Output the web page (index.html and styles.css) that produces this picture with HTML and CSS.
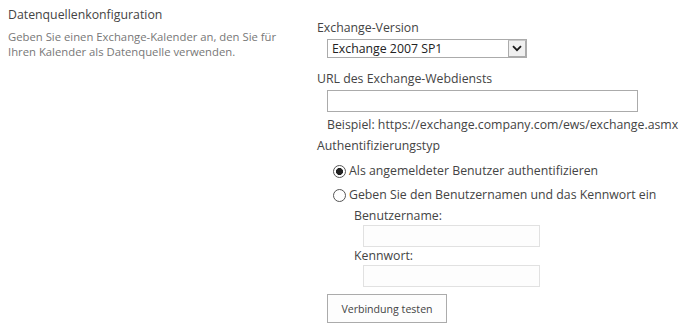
FILE: index.html
```html
<!DOCTYPE html>
<html lang="de">
<head>
    <meta charset="UTF-8">
    <title>Datenquellenkonfiguration</title>
    <link rel="stylesheet" href="styles.css">
</head>
<body>
    <div class="section">
        <div class="section-desc">
            <h3 class="section-title">Datenquellenkonfiguration</h3>
            <p class="section-text">Geben Sie einen Exchange-Kalender an, den Sie für Ihren Kalender als Datenquelle verwenden.</p>
        </div>

        <div class="section-body">
            <div class="field-label">Exchange-Version</div>
            <div class="select-wrap">
                <select class="select">
                    <option>Exchange 2007 SP1</option>
                </select>
                <span class="select-arrow">
                    <svg width="10" height="7" viewBox="0 0 10 7">
                        <path d="M1 1.2 L5 5.2 L9 1.2" fill="none" stroke="#1a1a1a" stroke-width="1.8"/>
                    </svg>
                </span>
            </div>

            <div class="field-label">URL des Exchange-Webdiensts</div>
            <input type="text" class="text-input url-input">
            <div class="example">Beispiel: https://exchange.company.com/ews/exchange.asmx</div>

            <div class="field-label auth-label">Authentifizierungstyp</div>
            <label class="radio-row first">
                <input type="radio" name="auth" checked>
                <span>Als angemeldeter Benutzer authentifizieren</span>
            </label>
            <label class="radio-row">
                <input type="radio" name="auth">
                <span>Geben Sie den Benutzernamen und das Kennwort ein</span>
            </label>

            <div class="credentials">
                <div class="cred-label">Benutzername:</div>
                <input type="text" class="text-input cred-input" disabled>
                <div class="cred-label">Kennwort:</div>
                <input type="password" class="text-input cred-input" disabled>
            </div>

            <button type="button" class="test-btn">Verbindung testen</button>
        </div>
    </div>
</body>
</html>
```

FILE: styles.css
```css
:root {
    --text-color: #444444;
    --muted-color: #777777;
    --border-color: #ababab;
    --disabled-border: #e1e1e1;
}

body {
    margin: 0;
    font-family: 'Open Sans', sans-serif;
    font-size: 12.3px;
    color: var(--text-color);
    background-color: white;
}

.section {
    display: flex;
    padding-top: 6px;
}

.section-desc {
    width: 301px;
    padding-left: 8px;
    flex-shrink: 0;
}

.section-title {
    margin: 0;
    font-size: 12.3px;
    font-weight: normal;
    line-height: 18px;
}

.section-text {
    max-width: 272px;
    margin: 5px 0 0;
    font-size: 11.3px;
    line-height: 15px;
    color: var(--muted-color);
}

.section-body {
    flex: 1;
    padding-top: 13px;
    padding-left: 8px;
}

.field-label {
    line-height: 18px;
}

.select-wrap {
    position: relative;
    width: 200px;
    height: 19px;
    margin: 2px 0 12px 10px;
}

.select {
    appearance: none;
    -webkit-appearance: none;
    width: 100%;
    height: 100%;
    margin: 0;
    padding: 0 0 0 4px;
    border: 1px solid var(--border-color);
    border-radius: 0;
    background: white;
    font-family: inherit;
    font-size: 12.3px;
    color: #222;
}

.select-arrow {
    position: absolute;
    top: 1px;
    right: 1px;
    width: 16px;
    height: 15px;
    border: 1px solid var(--border-color);
    border-top-color: #c8c8c8;
    background-color: #f0f0f0;
    display: flex;
    align-items: center;
    justify-content: center;
    pointer-events: none;
}

.text-input {
    display: block;
    box-sizing: border-box;
    margin: 0;
    padding: 0 4px;
    border: 1px solid var(--border-color);
    border-radius: 0;
    background: white;
    font-family: inherit;
    font-size: 12.3px;
}

.url-input {
    width: 311px;
    height: 22px;
    margin: 2px 0 4px 10px;
}

.example {
    margin-left: 10px;
    line-height: 18px;
}

.auth-label {
    margin-top: 3px;
}

.radio-row {
    display: flex;
    align-items: center;
    gap: 3px;
    margin-top: 6px;
    margin-left: 16px;
    line-height: 18px;
}

.radio-row.first {
    margin-top: 7px;
}

.radio-row input {
    appearance: none;
    -webkit-appearance: none;
    box-sizing: border-box;
    width: 13px;
    height: 13px;
    margin: 0;
    border: 1px solid #555;
    border-radius: 50%;
    background-color: white;
}

.radio-row input:checked {
    background: radial-gradient(circle, #222 0, #222 3.2px, white 3.8px);
}

.credentials {
    padding-left: 37px;
}

.cred-label {
    line-height: 18px;
    margin-top: 3px;
}

.cred-label + .cred-input + .cred-label {
    margin-top: 0;
}

.cred-input {
    width: 177px;
    height: 22px;
    margin: 0 0 0 9px;
    border-color: var(--disabled-border);
    background-color: #fdfdfd;
}

.test-btn {
    display: block;
    width: 120px;
    height: 29px;
    margin: 7px 0 0 10px;
    padding: 0;
    border: 1px solid var(--border-color);
    background-color: #fdfdfd;
    font-family: inherit;
    font-size: 10.6px;
    color: var(--text-color);
    cursor: pointer;
}
```
